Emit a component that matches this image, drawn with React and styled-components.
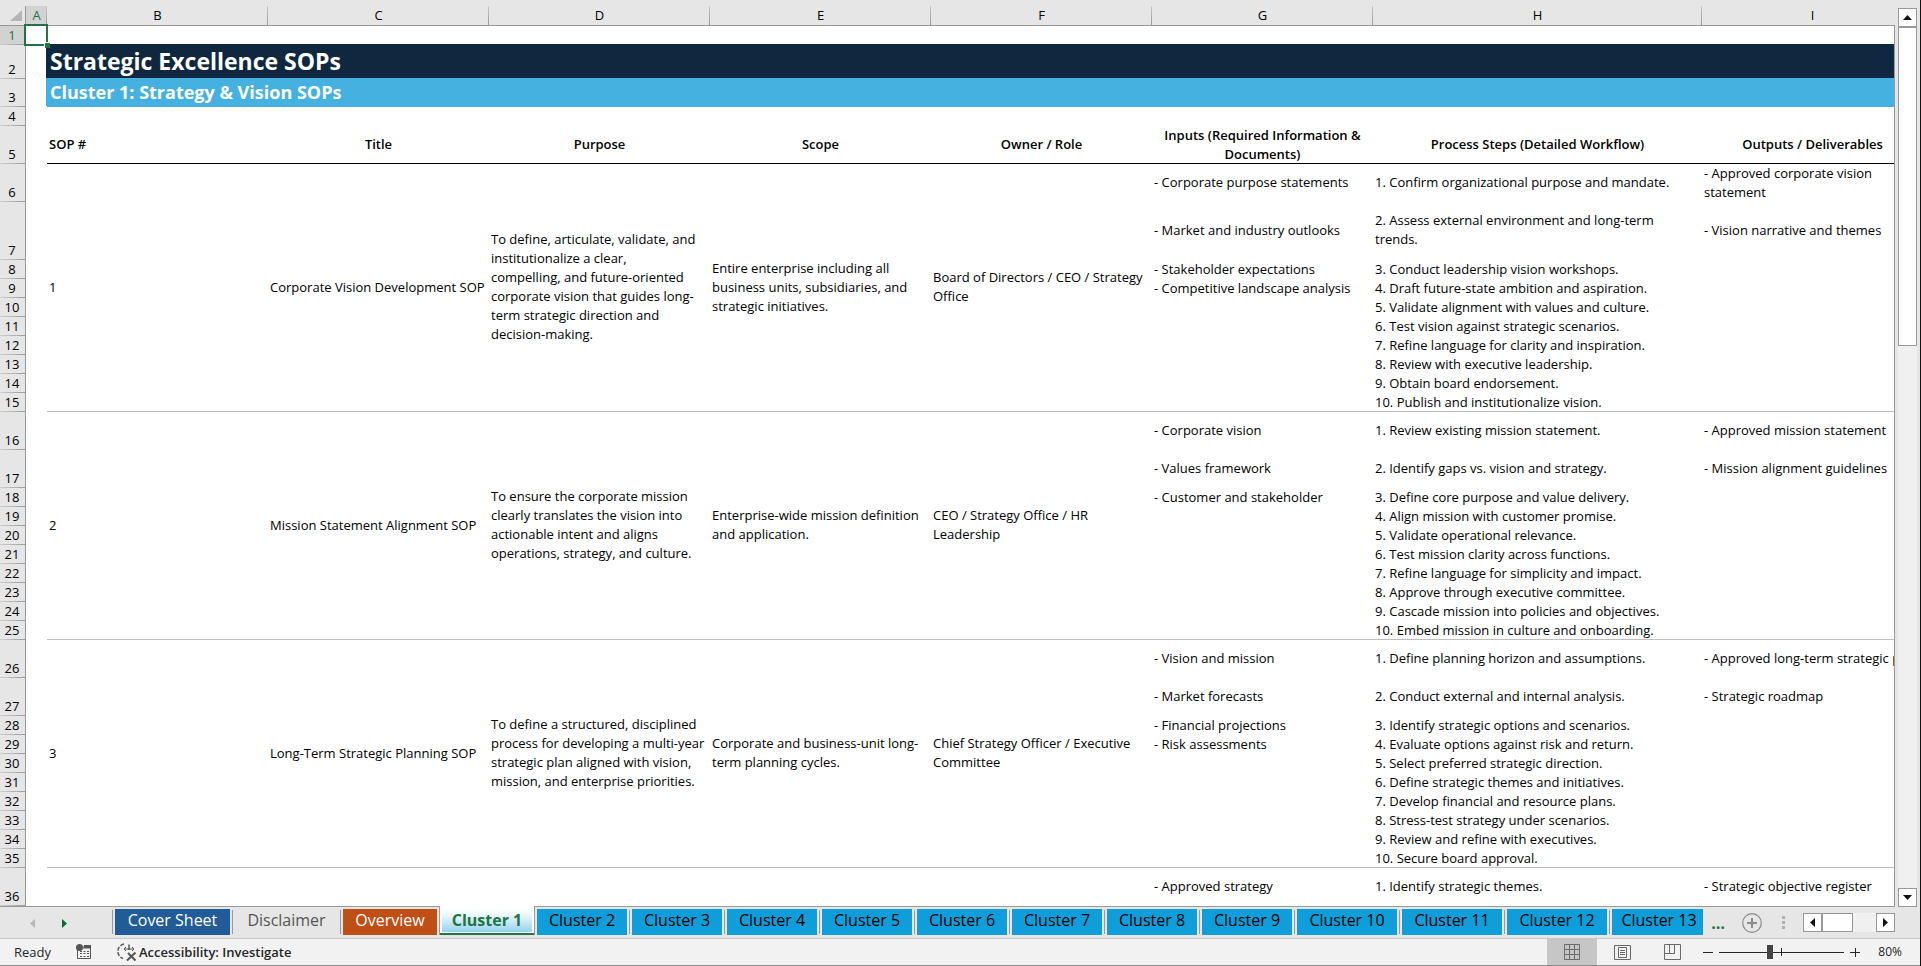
import React, { useState } from "react";
import styled, { createGlobalStyle, css } from "styled-components";

const uiFont = `"Open Sans", "Noto Sans", sans-serif`;

const color = {
  chrome: "#e6e6e6",
  status: "#f2f2f2",
  line: "#999999",
  green: "#217346",
  navy: "#0f2840",
  sky: "#45b1e1",
  tabBlue: "#0f9ed9",
};

const GlobalStyle = createGlobalStyle`
  html, body, #root { height: 100%; }
  body { margin: 0; overflow: hidden; background: ${color.chrome}; }
  *, *::before, *::after { box-sizing: border-box; }
  button { margin: 0; padding: 0; border: 0; background: none; font: inherit; color: inherit; }
`;

const Window = styled.div`
  display: flex;
  flex-direction: column;
  height: 100vh;
  padding-top: 6px;
  border-right: 1px solid #111;
  background: ${color.chrome};
`;

const Workspace = styled.main`
  flex: 1;
  display: flex;
  min-height: 0;
`;

const GridPane = styled.div`
  flex: 1;
  min-width: 0;
  overflow: hidden;
  background: linear-gradient(${color.chrome} 19px, ${color.line} 19px 20px, #fff 20px);
  border-bottom: 1px solid ${color.line};
  position: relative;
`;

/* Right edge of the cells, below the column letters */
const PaneEdge = styled.div`
  width: 1px;
  margin-top: 19px;
  background: ${color.line};
`;

const Sheet = styled.table`
  table-layout: fixed;
  width: 1923px;
  border-collapse: separate;
  border-spacing: 0;
  font: 13px/19px ${uiFont};
  color: #000;
`;

const Col = styled.col`
  width: ${(p) => p.$w}px;
`;

const Row = styled.tr`
  height: ${(p) => p.$h}px;
`;

const Corner = styled.td`
  padding: 4px 3px 4px 10px;
  line-height: 0;
  border-right: 1px solid ${color.line};
  border-bottom: 1px solid ${color.line};
`;

const ColumnHead = styled.th`
  height: 20px;
  padding: 0;
  font-weight: 400;
  text-align: center;
  color: ${(p) => (p.$selected ? color.green : "#000")};
  background: linear-gradient(#c8c8c8, ${color.line}) right / 1px 100% no-repeat
    ${(p) => (p.$selected ? "#d2d2d2" : color.chrome)};
  border-bottom: 1px solid ${color.line};
`;

const RowHead = styled.th`
  padding: 0 1px 0 0;
  vertical-align: bottom;
  text-align: center;
  font-weight: 400;
  color: ${(p) => (p.$selected ? color.green : "#000")};
  background: linear-gradient(to right, #d0d0d0, ${color.line}) bottom / 100% 1px no-repeat
    ${(p) => (p.$selected ? "#d2d2d2" : color.chrome)};
  border-right: 1px solid ${color.line};
`;

/* $roomy: the text leaves space in the cell, so it sits clear of the bottom rule */
const Cell = styled.td`
  padding: 0 2px ${(p) => (p.$roomy ? 2 : 0)}px;
  vertical-align: middle;
  white-space: pre;
  ${(p) => p.$rule && css`box-shadow: inset 0 -1px 0 ${p.$rule};`}
`;

const HeadCell = styled(Cell)`
  font-weight: 600;
  text-align: ${(p) => (p.$left ? "left" : "center")};
`;

/* The fill also covers the gridline above and to the left of the band */
const Banner = styled(Cell)`
  padding: 0 3px 2px;
  background: ${(p) => p.$bg};
  box-shadow: -1px -1px 0 ${(p) => p.$bg};
  color: #fff;
  font-weight: 700;
  font-size: ${(p) => p.$size}px;
  line-height: 24px;
`;

const ActiveCell = styled(Cell)`
  position: relative;
  &::before {
    content: "";
    position: absolute;
    inset: -2px -1px -1px -2px;
    border: 2px solid ${color.green};
  }
  &::after {
    content: "";
    position: absolute;
    right: -3px;
    bottom: -3px;
    width: 6px;
    height: 6px;
    background: ${color.green};
    border: solid #fff;
    border-width: 1px 0 0 1px;
  }
`;

const VScroll = styled.div`
  display: flex;
  flex-direction: column;
  width: 19px;
  margin: 2px 3px 0;
  background: #f0f0f0;
`;

const HScroll = styled.div`
  display: flex;
  width: 92px;
  height: 19px;
  background: #f0f0f0;
`;

const ScrollButton = styled.button`
  display: grid;
  place-items: center;
  flex: none;
  width: 19px;
  height: 19px;
  background: #fff;
  border: 1px solid ${color.line};
`;

const Thumb = styled.div`
  flex: none;
  background: #fff;
  border: 1px solid ${color.line};
  ${(p) => (p.$vertical ? css`height: 35.5%;` : css`width: 31px;`)}
`;

const Spacer = styled.div`
  flex: 1;
`;

const TabBar = styled.div`
  display: flex;
  flex: none;
  height: 32px;
  border-bottom: 1px solid #c6c6c6;
  font: 16px/22px ${uiFont};
`;

const SheetNav = styled.div`
  display: flex;
  align-items: center;
  gap: 27px;
  width: 113px;
  padding: 2px 0 0 30px;
  background: linear-gradient(${color.line}, ${color.line}) right 3px / 1px 24px no-repeat;
`;

const NavButton = styled.button`
  display: grid;
  line-height: 0;
`;

const TabList = styled.div`
  display: flex;
  flex: 1;
  align-items: flex-start;
  min-width: 0;
  overflow-x: clip;
  overflow-y: visible;
`;

const TabSlot = styled.div`
  flex: none;
  padding: 2px ${(p) => (p.$rule ? 3 : 2)}px 0 2px;
  ${(p) =>
    p.$rule &&
    css`background: linear-gradient(${color.line}, ${color.line}) right 3px / 1px 24px no-repeat;`}
`;

const Tab = styled.button`
  display: block;
  width: ${(p) => p.$w}px;
  height: 26px;
  padding-bottom: 4px;
  white-space: nowrap;
  background: ${(p) => p.$bg};
  color: ${(p) => p.$fg};
`;

const ActiveSlot = styled.div`
  position: relative;
  flex: none;
  height: 29px;
  margin-top: -1px;
  padding: 3px 2px 0;
  background: #fff;
  border: solid ${color.line};
  border-width: 0 1px;
  box-shadow: inset 0 -2px 0 ${color.green};
`;

const ActiveTab = styled(Tab)`
  height: 23px;
  padding-bottom: 1px;
  font-weight: 700;
`;

const TabTools = styled.div`
  display: flex;
  align-items: center;
  flex: none;
  gap: 16px;
  padding: 0 25px 0 7px;
`;

const MoreTabs = styled.button`
  width: 16px;
  color: ${color.green};
  font-weight: 700;
`;

const IconButton = styled.button`
  display: grid;
  line-height: 0;
`;

const Grip = styled.div`
  width: 3px;
  height: 13px;
  margin: 0 2px 0 4px;
  background: repeating-linear-gradient(#b0b0b0 0 3px, transparent 3px 5px);
`;

const StatusBar = styled.footer`
  display: flex;
  align-items: stretch;
  flex: none;
  height: 27px;
  background: ${color.status};
  border-bottom: 1px solid #8c8c8c;
  font: 13px/24px ${uiFont};
  color: #262626;
`;

const StatusGroup = styled.div`
  display: flex;
  align-items: center;
  gap: 25px;
  padding-left: 14px;
`;

const AccessibilityButton = styled.button`
  display: flex;
  align-items: center;
  gap: 2px;
  font-weight: 600;
`;

const ViewButton = styled.button`
  display: grid;
  place-items: center;
  width: 50px;
  background: ${(p) => (p.$on ? "#c6c6c6" : "transparent")};
`;

const ZoomGroup = styled.div`
  display: flex;
  align-items: center;
  gap: 6px;
  padding: 0 18px 0 6px;
`;

const ZoomSlider = styled.input`
  appearance: none;
  width: 125px;
  height: 16px;
  margin: 0;
  background:
    linear-gradient(#262626, #262626) 62px 4px / 1px 8px no-repeat,
    linear-gradient(#262626, #262626) 0 8px / 100% 1px no-repeat;
  &::-webkit-slider-thumb {
    appearance: none;
    width: 6px;
    height: 14px;
    background: #444;
  }
`;

const ZoomLevel = styled.button`
  width: 26px;
  margin-left: 10px;
  font-size: 12px;
  text-align: right;
`;

const arrows = {
  up: "M0 5 L4.500 0 L9 5Z",
  down: "M0 0 L9 0 L4.500 5Z",
  left: "M5 0 L5 9 L0 4.500Z",
  right: "M0 0 L5 4.500 L0 9Z",
};

function Arrow({ dir, fill = "#111" }) {
  const tall = dir === "left" || dir === "right";
  const [w, h] = tall ? [5, 9] : [9, 5];
  return (
    <svg width={w} height={h} viewBox={`0 0 ${w} ${h}`} aria-hidden="true">
      <path d={arrows[dir]} fill={fill} />
    </svg>
  );
}

function MacroIcon() {
  return (
    <svg width="16" height="16" viewBox="0 0 16 16" aria-hidden="true">
      <path d="M1.500 6 V14.500 H14.500 V2" fill="none" stroke="#555" />
      <path d="M8 1 H15 V4.500 H7Z" fill="#555" />
      <circle cx="3.500" cy="3.500" r="3.500" fill="#555" />
      <path d="M4 7.500H13M4 9.500H13M4 12.500H13" stroke="#555" strokeDasharray="2 1.500" />
    </svg>
  );
}

function AccessibilityIcon() {
  return (
    <svg width="20" height="20" viewBox="0 0 20 20" fill="none" stroke="#555" aria-hidden="true">
      <path d="M7 2 A7.500 7.500 0 0 0 6 16.500" strokeWidth="1.500" strokeDasharray="4 1.500" />
      <path d="M7 7 H17 M9 5 L7 7 L9 9 M15 5 L17 7 L15 9" strokeWidth="1" />
      <path d="M12 2.500 V8" strokeWidth="1.500" />
      <path d="M11 11 L18.500 18.500 M18.500 10.500 L10 18.500" strokeWidth="2" />
    </svg>
  );
}

function NormalViewIcon() {
  return (
    <svg width="16" height="16" viewBox="0 0 16 16" fill="none" stroke="#6a6a6a" aria-hidden="true">
      <path d="M.5 .5H15.500V15.500H.5Z M5.500 0V16 M10.500 0V16 M0 5.500H16 M0 10.500H16" />
    </svg>
  );
}

function PageLayoutIcon() {
  return (
    <svg width="17" height="15" viewBox="0 0 17 15" fill="none" stroke="#6a6a6a" aria-hidden="true">
      <path d="M.5 .5H16.500V14.500H.5Z M4.500 2.500H12.500V12.500H4.500Z M6 5.500H11 M6 7.500H11 M6 9.500H11" />
    </svg>
  );
}

function PageBreakIcon() {
  return (
    <svg width="17" height="16" viewBox="0 0 17 16" fill="none" stroke="#6a6a6a" aria-hidden="true">
      <path d="M.5 .5H16.500V15.500H.5Z M5.500 0V9 M10.500 0V9.500 M0 9.500H11" />
    </svg>
  );
}

function NewSheetIcon() {
  return (
    <svg width="20" height="20" viewBox="0 0 20 20" fill="none" stroke="#8a8a8a" aria-hidden="true">
      <circle cx="10" cy="10" r="9.300" strokeWidth="1.200" />
      <path d="M10 5V15M5 10H15" strokeWidth="2" />
    </svg>
  );
}

function Sign({ plus }) {
  return (
    <svg width="10" height="10" viewBox="0 0 10 10" stroke="#262626" aria-hidden="true">
      <path d={plus ? "M0 5.500H10M5.500 1V10" : "M0 5.500H10"} />
    </svg>
  );
}

const columns = [
  ["A", 21],
  ["B", 221],
  ["C", 221],
  ["D", 221],
  ["E", 221],
  ["F", 221],
  ["G", 221],
  ["H", 329],
  ["I", 221],
];

const headings = [
  "SOP #",
  "Title",
  "Purpose",
  "Scope",
  "Owner / Role",
  "Inputs (Required Information &\nDocuments)",
  "Process Steps (Detailed Workflow)",
  "Outputs / Deliverables",
];

const sops = [
  {
    start: 6,
    heights: [38, 58],
    facts: [
      "1",
      "Corporate Vision Development SOP",
      "To define, articulate, validate, and\ninstitutionalize a clear,\ncompelling, and future-oriented\ncorporate vision that guides long-\nterm strategic direction and\ndecision-making.",
      "Entire enterprise including all\nbusiness units, subsidiaries, and\nstrategic initiatives.",
      "Board of Directors / CEO / Strategy\nOffice",
    ],
    inputs: [
      "- Corporate purpose statements",
      "- Market and industry outlooks",
      "- Stakeholder expectations",
      "- Competitive landscape analysis",
    ],
    steps: [
      "1. Confirm organizational purpose and mandate.",
      "2. Assess external environment and long-term\ntrends.",
      "3. Conduct leadership vision workshops.",
      "4. Draft future-state ambition and aspiration.",
      "5. Validate alignment with values and culture.",
      "6. Test vision against strategic scenarios.",
      "7. Refine language for clarity and inspiration.",
      "8. Review with executive leadership.",
      "9. Obtain board endorsement.",
      "10. Publish and institutionalize vision.",
    ],
    outputs: ["- Approved corporate vision\nstatement", "- Vision narrative and themes"],
  },
  {
    start: 16,
    heights: [38, 38],
    facts: [
      "2",
      "Mission Statement Alignment SOP",
      "To ensure the corporate mission\nclearly translates the vision into\nactionable intent and aligns\noperations, strategy, and culture.",
      "Enterprise-wide mission definition\nand application.",
      "CEO / Strategy Office / HR\nLeadership",
    ],
    inputs: ["- Corporate vision", "- Values framework", "- Customer and stakeholder"],
    steps: [
      "1. Review existing mission statement.",
      "2. Identify gaps vs. vision and strategy.",
      "3. Define core purpose and value delivery.",
      "4. Align mission with customer promise.",
      "5. Validate operational relevance.",
      "6. Test mission clarity across functions.",
      "7. Refine language for simplicity and impact.",
      "8. Approve through executive committee.",
      "9. Cascade mission into policies and objectives.",
      "10. Embed mission in culture and onboarding.",
    ],
    outputs: ["- Approved mission statement", "- Mission alignment guidelines"],
  },
  {
    start: 26,
    heights: [38, 38],
    facts: [
      "3",
      "Long-Term Strategic Planning SOP",
      "To define a structured, disciplined\nprocess for developing a multi-year\nstrategic plan aligned with vision,\nmission, and enterprise priorities.",
      "Corporate and business-unit long-\nterm planning cycles.",
      "Chief Strategy Officer / Executive\nCommittee",
    ],
    inputs: [
      "- Vision and mission",
      "- Market forecasts",
      "- Financial projections",
      "- Risk assessments",
    ],
    steps: [
      "1. Define planning horizon and assumptions.",
      "2. Conduct external and internal analysis.",
      "3. Identify strategic options and scenarios.",
      "4. Evaluate options against risk and return.",
      "5. Select preferred strategic direction.",
      "6. Define strategic themes and initiatives.",
      "7. Develop financial and resource plans.",
      "8. Stress-test strategy under scenarios.",
      "9. Review and refine with executives.",
      "10. Secure board approval.",
    ],
    outputs: ["- Approved long-term strategic plan", "- Strategic roadmap"],
  },
  {
    start: 36,
    heights: [38],
    facts: ["", "", "", "", ""],
    inputs: ["- Approved strategy"],
    steps: ["1. Identify strategic themes."],
    outputs: ["- Strategic objective register"],
  },
];

const lineCount = (text) => text.split("\n").length;

function SopRows({ sop }) {
  const span = sop.steps.length;
  const rule = "#bfbfbf";
  return sop.steps.map((step, i) => {
    const height = sop.heights[i] || 19;
    const items = [sop.inputs[i] || "", step, sop.outputs[i] || ""];
    return (
      <Row key={step} $h={height}>
        <RowHead scope="row">{sop.start + i}</RowHead>
        <Cell />
        {i === 0 &&
          sop.facts.map((fact, n) => (
            <Cell key={n} rowSpan={span} $roomy $rule={span === 10 ? rule : undefined}>
              {fact}
            </Cell>
          ))}
        {items.map((text, n) => (
          <Cell
            key={n}
            $roomy={lineCount(text) * 19 + 2 <= height}
            $rule={i === 9 ? rule : undefined}
          >
            {text}
          </Cell>
        ))}
      </Row>
    );
  });
}

const tabs = [
  { name: "Cover Sheet", w: 115, bg: "#215c98", fg: "#fff" },
  { name: "Disclaimer", w: 103, bg: "transparent", fg: "#555" },
  { name: "Overview", w: 94, bg: "#c04f15", fg: "#fff", flush: true },
  { name: "Cluster 1", w: 90, active: true },
  ...Array.from({ length: 11 }, (_, i) => ({
    name: `Cluster ${i + 2}`,
    w: i + 2 > 9 ? 100 : 90,
    bg: color.tabBlue,
    fg: "#000",
  })),
  { name: "Cluster 13", w: 94, bg: color.tabBlue, fg: "#000", flush: true },
];

export default function App() {
  const [zoom, setZoom] = useState(40);
  return (
    <>
      <GlobalStyle />
      <Window>
        <Workspace>
          <GridPane>
            <Sheet>
              <colgroup>
                <Col $w={26} />
                {columns.map(([id, w]) => (
                  <Col key={id} $w={w} />
                ))}
              </colgroup>
              <thead>
                <Row $h={20}>
                  <Corner>
                    <svg width="12" height="11" viewBox="0 0 12 11" aria-hidden="true">
                      <path d="M12 0V11H0Z" fill="#b5b5b5" />
                    </svg>
                  </Corner>
                  {columns.map(([id]) => (
                    <ColumnHead key={id} scope="col" $selected={id === "A"}>
                      {id}
                    </ColumnHead>
                  ))}
                </Row>
              </thead>
              <tbody>
                <Row $h={19}>
                  <RowHead scope="row" $selected>1</RowHead>
                  <ActiveCell />
                  <Cell colSpan={8} />
                </Row>
                <Row $h={34}>
                  <RowHead scope="row">2</RowHead>
                  <Cell />
                  <Banner colSpan={8} $bg={color.navy} $size={23}>Strategic Excellence SOPs</Banner>
                </Row>
                <Row $h={28}>
                  <RowHead scope="row">3</RowHead>
                  <Cell />
                  <Banner colSpan={8} $bg={color.sky} $size={18}>Cluster 1: Strategy &amp; Vision SOPs</Banner>
                </Row>
                <Row $h={19}>
                  <RowHead scope="row">4</RowHead>
                  <Cell colSpan={9} />
                </Row>
                <Row $h={38}>
                  <RowHead scope="row">5</RowHead>
                  <Cell />
                  {headings.map((h, i) => (
                    <HeadCell
                      key={h}
                      as="th"
                      scope="col"
                      $left={i === 0}
                      $roomy={lineCount(h) === 1}
                      $rule="#000"
                    >
                      {h}
                    </HeadCell>
                  ))}
                </Row>
                {sops.map((sop) => (
                  <SopRows key={sop.start} sop={sop} />
                ))}
              </tbody>
            </Sheet>
          </GridPane>
          <PaneEdge />
          <VScroll>
            <ScrollButton aria-label="Scroll up"><Arrow dir="up" /></ScrollButton>
            <Thumb $vertical />
            <Spacer />
            <ScrollButton aria-label="Scroll down"><Arrow dir="down" /></ScrollButton>
          </VScroll>
        </Workspace>

        <TabBar>
          <SheetNav>
            <NavButton aria-label="Previous sheets" disabled><Arrow dir="left" fill="#b8b8b8" /></NavButton>
            <NavButton aria-label="Next sheets"><Arrow dir="right" fill="#0b6b35" /></NavButton>
          </SheetNav>
          <TabList role="tablist">
            {tabs.map((t) =>
              t.active ? (
                <ActiveSlot key={t.name}>
                  <ActiveTab
                    role="tab"
                    aria-selected="true"
                    $w={t.w}
                    $bg="linear-gradient(#fff, #e3f3fa 35%, #94d3ee)"
                    $fg={color.green}
                  >
                    {t.name}
                  </ActiveTab>
                </ActiveSlot>
              ) : (
                <TabSlot key={t.name} $rule={!t.flush}>
                  <Tab role="tab" aria-selected="false" $w={t.w} $bg={t.bg} $fg={t.fg}>
                    {t.name}
                  </Tab>
                </TabSlot>
              )
            )}
          </TabList>
          <TabTools>
            <MoreTabs aria-label="More sheets">…</MoreTabs>
            <IconButton aria-label="New sheet"><NewSheetIcon /></IconButton>
            <Grip />
            <HScroll>
              <ScrollButton aria-label="Scroll left"><Arrow dir="left" /></ScrollButton>
              <Thumb />
              <Spacer />
              <ScrollButton aria-label="Scroll right"><Arrow dir="right" /></ScrollButton>
            </HScroll>
          </TabTools>
        </TabBar>

        <StatusBar>
          <StatusGroup>
            <span>Ready</span>
            <IconButton aria-label="Record macro"><MacroIcon /></IconButton>
            <AccessibilityButton>
              <AccessibilityIcon />
              Accessibility: Investigate
            </AccessibilityButton>
          </StatusGroup>
          <Spacer />
          <ViewButton $on aria-label="Normal view"><NormalViewIcon /></ViewButton>
          <ViewButton aria-label="Page layout"><PageLayoutIcon /></ViewButton>
          <ViewButton aria-label="Page break preview"><PageBreakIcon /></ViewButton>
          <ZoomGroup>
            <IconButton aria-label="Zoom out"><Sign /></IconButton>
            <ZoomSlider
              type="range"
              aria-label="Zoom"
              min="0"
              max="100"
              value={zoom}
              onChange={(e) => setZoom(Number(e.target.value))}
            />
            <IconButton aria-label="Zoom in"><Sign plus /></IconButton>
            <ZoomLevel>80%</ZoomLevel>
          </ZoomGroup>
        </StatusBar>
      </Window>
    </>
  );
}
